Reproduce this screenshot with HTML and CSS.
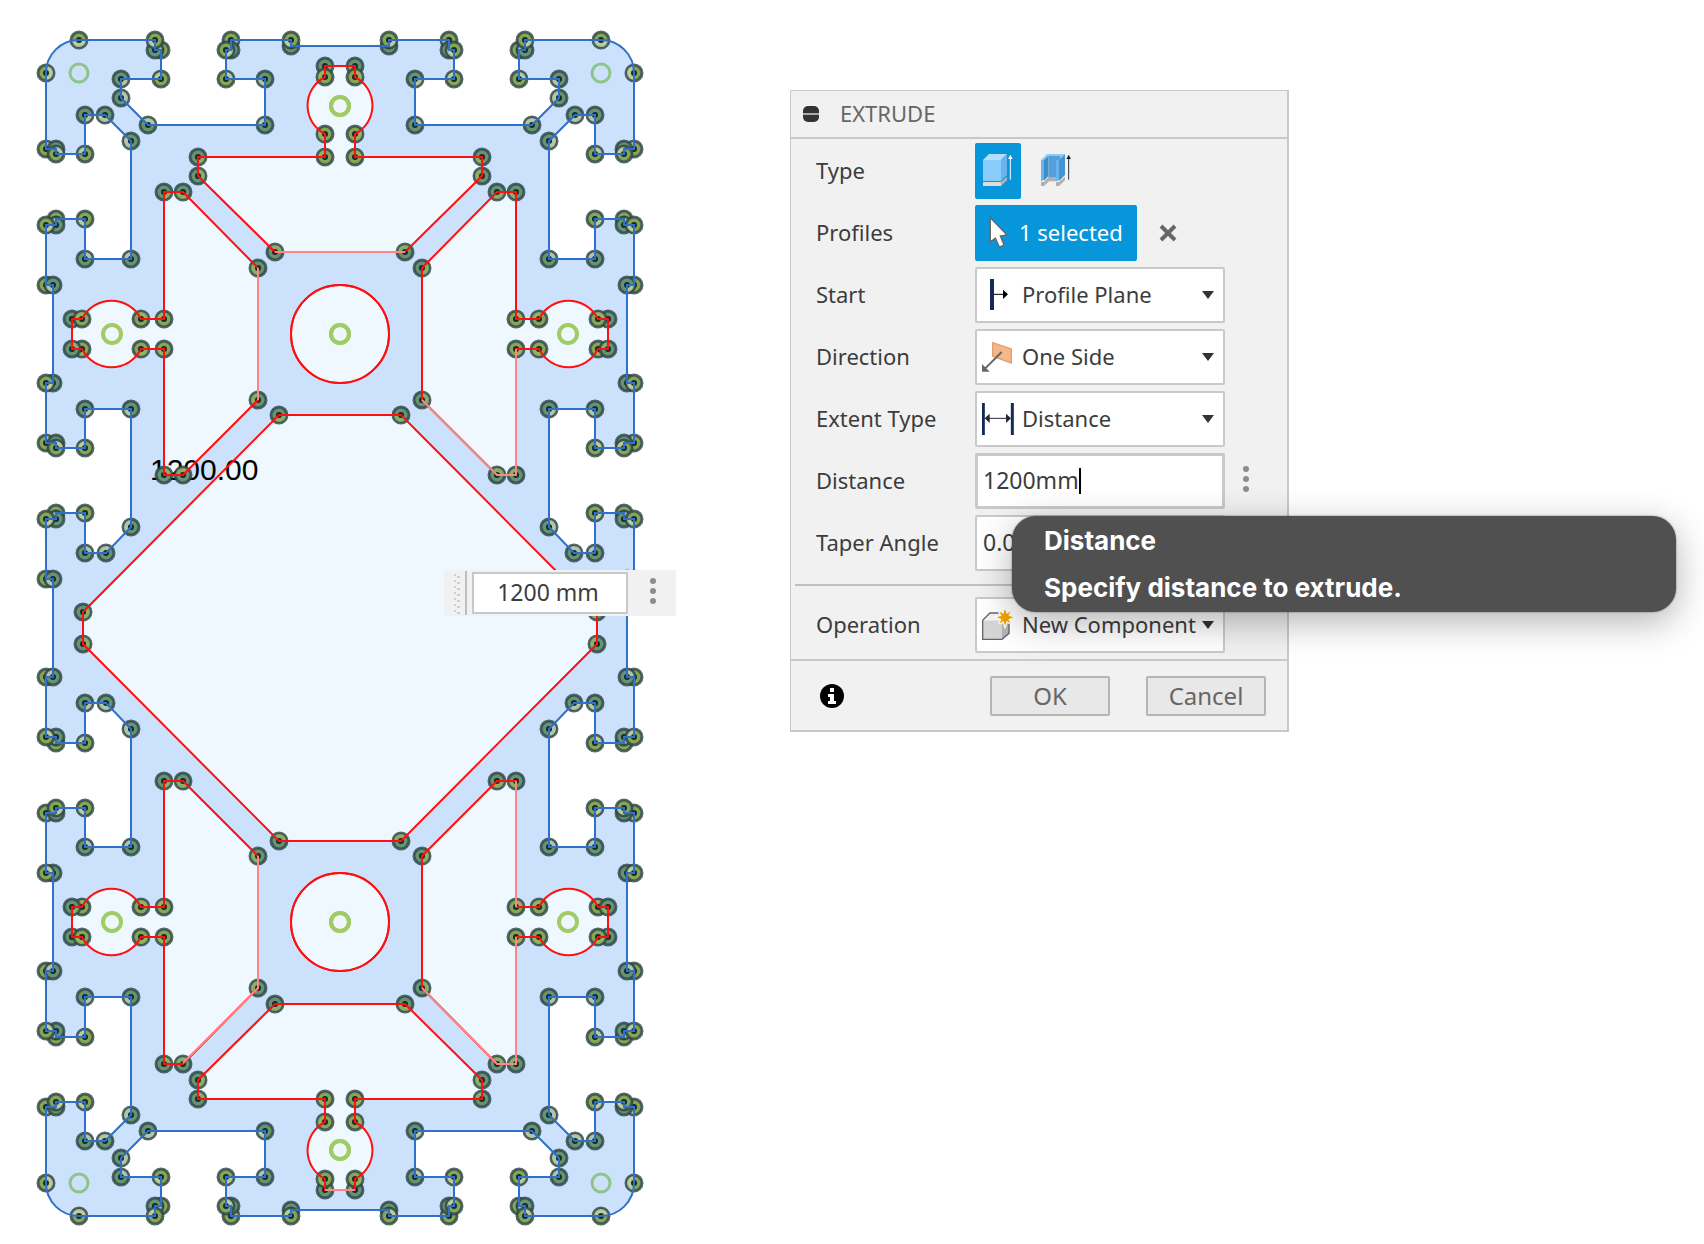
FILE: index.html
```html
<!DOCTYPE html>
<html lang="en">
<head>
<meta charset="utf-8">
<title>Extrude</title>
<link rel="stylesheet" href="styles.css">
</head>
<body>
<main class="workspace">
  <section class="canvas" aria-label="Sketch">
    <svg id="sketch" class="sketch" width="700" height="1240" viewBox="0 0 700 1240" role="img" aria-label="Extrusion profile">
      <text class="dimension" x="150" y="480">1200.00</text>
    </svg>
    <form class="manipulator">
      <svg class="grip" width="24" height="46" viewBox="0 0 24 46" aria-hidden="true">
        <path d="M10 5h2M13 7h3M10 11h2M13 13h3M10 17h2M13 19h3M10 23h2M13 25h3M10 29h2M13 31h3M10 35h2M13 37h3M10 41h2M13 43h3" stroke="#cfcfcf" stroke-width="2"/>
        <path d="M22 1v44" stroke="#bdbdbd" stroke-width="2"/>
      </svg>
      <input class="manipulator-input" type="text" value="1200 mm" aria-label="Distance value">
      <button class="dots" type="button" aria-label="Value options"><i></i><i></i><i></i></button>
    </form>
  </section>

  <form class="panel">
    <header class="panel-head">
      <button class="collapse" type="button" aria-label="Collapse"></button>
      <h1 class="panel-title">EXTRUDE</h1>
    </header>
    <div class="panel-body">
      <div class="row" role="radiogroup" aria-labelledby="type-label">
        <span class="label" id="type-label">Type</span>
        <div class="types">
          <label class="type">
            <input class="type-input" type="radio" name="type" aria-label="Extrude" checked>
            <svg width="46" height="56" viewBox="585 189 138 168" aria-hidden="true">
              <path d="M609 240h54v63h-54z" fill="#8accfc"/><path d="M609 240l18-18h54l-18 18z" fill="#b4deff"/>
              <path d="M663 240l18-18v63l-18 18z" fill="#67b4ee"/><path d="M609 306h54v12h-54z" fill="#dcdcdc"/>
              <path d="M663 306l18-16v11l-18 17z" fill="#b3b3b3"/>
              <path d="M691 299v-64" stroke="#fff" stroke-width="3"/><path d="M684 237l7-13 7 13z" fill="#fff"/>
            </svg>
          </label>
          <label class="type">
            <input class="type-input" type="radio" name="type" aria-label="Thin extrude">
            <svg width="46" height="56" viewBox="759 189 138 168" aria-hidden="true">
              <path d="M783 240l18-18h54l-18 18h-9l11-12h-32l-11 12z" fill="#8accfc"/>
              <path d="M783 240h9v60l-9 4z" fill="#67b4ee"/><path d="M792 240l13-12v60l-13 14z" fill="#3c8cc8"/>
              <path d="M805 228h35v10l-12 4v49h-23z" fill="#559fd9"/><path d="M828 240h9v61l-9 3z" fill="#67b4ee"/>
              <path d="M837 240l18-18v63l-18 18z" fill="#4593d0"/>
              <path d="M783 306h9l13-15h23v13h-21l-15 14h-9zM828 306h9l18-16v11l-18 17h-9z" fill="#b0b0b0"/>
              <path d="M866 299v-64" stroke="#333" stroke-width="3"/><path d="M859 237l7-13 7 13z" fill="#222"/>
            </svg>
          </label>
        </div>
      </div>
      <div class="row">
        <span class="label">Profiles</span>
        <div class="profiles">
          <button class="selection" type="button">
            <svg width="20" height="32" viewBox="628 408 60 96" aria-hidden="true"><path d="M632 413v73l15-12 12 27 14-6-11-27 20-3z" fill="#fff" stroke="#666" stroke-width="4"/></svg>
            1 selected
          </button>
          <button class="clear" type="button" aria-label="Clear selection">
            <svg width="18" height="18" viewBox="0 0 18 18" aria-hidden="true"><path d="M2 2l14 14M16 2L2 16" stroke="#666" stroke-width="4"/></svg>
          </button>
        </div>
      </div>
      <div class="row">
        <label class="label" for="start">Start</label>
        <div class="pick">
          <svg class="pick-icon" width="32" height="32" viewBox="606 594 96 96" aria-hidden="true"><path d="M636 594v93" stroke="#142b57" stroke-width="12"/><path d="M642 640h30" stroke="#000" stroke-width="3"/><path d="M669 626l15 14-15 14z"/></svg>
          <select class="pick-select" id="start"><option>Profile Plane</option></select>
          <svg class="pick-arrow" width="12" height="8" viewBox="0 0 12 8" aria-hidden="true"><path d="M0 0h12L6 8z"/></svg>
        </div>
      </div>
      <div class="row">
        <label class="label" for="direction">Direction</label>
        <div class="pick">
          <svg class="pick-icon" width="32" height="32" viewBox="606 58 96 96" aria-hidden="true"><path d="M638 63l56 19v42l-56-20z" fill="#f6b789" stroke="#dfa173" stroke-width="4"/><path d="M665 91l-50 50" stroke="#666" stroke-width="6"/><path d="M606 127v23h23z" fill="#666"/></svg>
          <select class="pick-select" id="direction"><option>One Side</option></select>
          <svg class="pick-arrow" width="12" height="8" viewBox="0 0 12 8" aria-hidden="true"><path d="M0 0h12L6 8z"/></svg>
        </div>
      </div>
      <div class="row">
        <label class="label" for="extent">Extent Type</label>
        <div class="pick">
          <svg class="pick-icon" width="32" height="32" viewBox="606 246 96 96" aria-hidden="true"><path d="M610 246v96M697 246v96" stroke="#142b57" stroke-width="9"/><path d="M624 292h62" stroke="#222b38" stroke-width="3"/><path d="M614 292l15-14v28zM693 292l-15-14v28z" fill="#222b38"/></svg>
          <select class="pick-select" id="extent"><option>Distance</option></select>
          <svg class="pick-arrow" width="12" height="8" viewBox="0 0 12 8" aria-hidden="true"><path d="M0 0h12L6 8z"/></svg>
        </div>
      </div>
      <div class="row">
        <label class="label" for="distance">Distance</label>
        <div class="value">
          <input class="value-input value-active" id="distance" type="text" value="1200mm" aria-describedby="distance-tip">
          <span class="caret"></span>
          <div class="tip" id="distance-tip" role="tooltip"><p>Distance</p><p>Specify distance to extrude.</p></div>
        </div>
        <button class="dots" type="button" aria-label="Distance options"><i></i><i></i><i></i></button>
      </div>
      <div class="row">
        <label class="label" for="taper">Taper Angle</label>
        <div class="value"><input class="value-input" id="taper" type="text" value="0.0 deg"></div>
      </div>
      <hr class="divider">
      <div class="row">
        <label class="label" for="operation">Operation</label>
        <div class="pick">
          <svg class="pick-icon" width="32" height="32" viewBox="606 326 96 96" aria-hidden="true"><path d="M608 360h58v57h-58z" fill="#d6d6d6"/><path d="M608 360l24-22h54l-20 22z" fill="#f4f4f4"/><path d="M666 360l22-18v57l-22 18z" fill="#b5b5b5"/><path d="M608 417v-57l22-22h57v61l-21 18z" fill="none" stroke="#666" stroke-width="4"/><path d="M675 326l5 15 12-8-7 13 15 5-15 6 7 12-12-7-5 14-5-14-13 8 8-13-15-6 15-5-8-13 13 8z" fill="#f7a400" stroke="#fff" stroke-width="8" paint-order="stroke"/></svg>
          <select class="pick-select" id="operation"><option>New Component</option></select>
          <svg class="pick-arrow" width="12" height="8" viewBox="0 0 12 8" aria-hidden="true"><path d="M0 0h12L6 8z"/></svg>
        </div>
      </div>
    </div>
    <footer class="panel-foot">
      <button class="info" type="button" aria-label="Information">
        <svg width="24" height="24" viewBox="0 0 24 24" aria-hidden="true"><circle cx="12" cy="12" r="12"/><path d="M10 4h4v4h-4zM8 10h6v7h2v3H8v-3h2v-4H8z" fill="#fff"/></svg>
      </button>
      <button class="action" type="button">OK</button>
      <button class="action" type="button">Cancel</button>
    </footer>
  </form>
</main>
<script src="sketch.js"></script>
</body>
</html>
```

FILE: styles.css
```css
* { box-sizing: border-box; }
body { margin: 0; background: #fff; color: #3c3c3c; font: 22px/30px "Noto Sans", sans-serif; }
button, input, select { font: inherit; color: inherit; }
button { padding: 0; border: 0; background: none; }

.workspace { display: flex; align-items: flex-start; gap: 90px; overflow: hidden; }
.canvas { position: relative; flex: none; }
.sketch { display: block; }
.dimension { font: 30px "Liberation Sans", sans-serif; fill: #000; }

.body-fill { fill: #cce2fc; }
.void-fill { fill: #f0f8ff; }
.edge { fill: none; stroke: #3070c8; stroke-width: 2; }
.loop { fill: none; stroke: #ff1010; stroke-width: 2; }
.loop-soft { stroke: #ff8585; }
.point { stroke: #2c4348; stroke-opacity: .8; stroke-width: 3; }
.point-out { fill: #86a653; }
.point-in { fill: #66946f; }
.wedge { fill: #d3dcb9; opacity: .7; }
.wedge-void { fill: #9cba62; opacity: .7; }
.core { fill: #122b35; }
.center { fill: none; stroke: #a0cb65; stroke-width: 4; }
.center-corner { stroke: #8fc58a; stroke-width: 3; }

.manipulator { position: absolute; left: 444px; top: 570px; display: flex; align-items: center; gap: 4px; width: 232px; height: 46px; background: #f1f1f1; }
.manipulator-input { width: 156px; height: 42px; border: 2px solid #c8c8c8; background: #fff; text-align: center; padding: 0 4px 2px 0; font-size: 23px; }
.grip { flex: none; }
.dots { display: flex; flex-direction: column; align-items: center; gap: 4px; width: 42px; padding-bottom: 4px; }
.dots i { width: 6px; height: 6px; border-radius: 50%; background: #8c8c8c; }

.panel { flex: 0 1 499px; margin-top: 90px; background: #f1f1f1; border: 1px solid #c9c9c9; border-right-width: 2px; border-bottom-width: 2px; }
.panel-head { display: flex; align-items: center; gap: 21px; height: 48px; padding-left: 12px; border-bottom: 2px solid #c9c9c9; }
.collapse { width: 16px; height: 16px; border-radius: 5px; background: linear-gradient(#333 7px, #aaa 7px 9px, #333 9px); }
.panel-title { margin: 0; padding-bottom: 2px; font-size: 22px; font-weight: 400; color: #666; }
.panel-body { display: flex; flex-direction: column; gap: 6px; padding: 4px 0 6px; border-bottom: 2px solid #c9c9c9; }
.row { display: flex; align-items: center; height: 56px; padding-left: 25px; }
.label { flex: 0 0 159px; padding-bottom: 2px; }
.types, .profiles { display: flex; align-items: center; gap: 12px; }
.type { position: relative; width: 46px; height: 56px; border-radius: 2px; }
.type svg { display: block; }
.type:has(:checked) { background: #0896da; }
.type-input { position: absolute; inset: 0; margin: 0; opacity: 0; }
.selection { display: flex; align-items: center; gap: 10px; width: 162px; height: 56px; padding: 0 0 2px 14px; border-radius: 2px; background: #0896da; color: #fff; white-space: nowrap; }
.profiles { gap: 22px; }
.clear { display: flex; }

.pick { display: grid; align-items: center; width: 250px; height: 56px; border: 2px solid #c9c9c9; border-radius: 2px; background: #fff; }
.pick > * { grid-area: 1 / 1; }
.pick-icon { margin-left: 5px; pointer-events: none; z-index: 1; }
.pick-select { width: 100%; height: 100%; padding: 0 0 2px 45px; border: 0; background: none; appearance: none; }
.pick-arrow { justify-self: end; margin-right: 9px; fill: #333; pointer-events: none; }

.value { position: relative; width: 250px; height: 56px; }
.value-input { width: 100%; height: 100%; padding: 0 6px 2px; border: 2px solid #c9c9c9; border-radius: 2px; background: #fff; font-size: 23px; }
.value-active { border-width: 3px; padding: 0 5px 2px; }
.caret { position: absolute; left: 104px; top: 15px; width: 2px; height: 26px; background: #000; }
.tip { position: absolute; z-index: 2; left: 37px; top: 63px; width: 664px; height: 96px; padding: 1px 32px; border-radius: 24px; background: #505050; color: #fff; font: 700 26px/47px Inter, sans-serif; box-shadow: 0 0 2px rgba(0, 0, 0, .5), 0 10px 36px rgba(0, 0, 0, .3); }
.tip p { margin: 0; }
.divider { width: calc(100% - 8px); margin: 7px 4px 5px; border: 0; border-top: 2px solid #c0c0c0; }

.panel-foot { display: flex; align-items: center; height: 69px; padding: 0 21px 0 29px; }
.info { display: flex; margin-right: auto; }
.action { width: 120px; height: 40px; margin-left: 36px; border: 2px solid #b5b5b5; border-radius: 2px; background: #e8e8e8; color: #666; font-size: 24px; }
```

FILE: sketch.js
```js
// The profile is symmetric about x = 340 and y = 628, so one quarter is described and mirrored.
(() => {
const NS = 'http://www.w3.org/2000/svg';
const svg = document.getElementById('sketch');
const label = svg.querySelector('text');
const MIRRORS = ['', 'matrix(-1 0 0 1 680 0)', 'matrix(1 0 0 -1 0 1256)', 'matrix(-1 0 0 -1 680 1256)'];

const topEdge = [[340,46],[291,46],[291,40],[231,40],[231,50],[226,50],[226,79],[265,79],[265,125],[148,125],[121,98],[121,79],[161,79],[161,50],[155,50],[155,40],[79,40]];
const sideEdge = [[46,73],[46,149],[56,149],[56,154],[85,154],[85,115],[105,115],[131,141],[131,259],[85,259],[85,219],[56,219],[56,225],[46,225],[46,285],[53,285],[53,383],[46,383],[46,443],[56,443],[56,448],[85,448],[85,409],[131,409],[131,527],[106,553],[85,553],[85,513],[56,513],[56,519],[46,519],[46,579],[53,579],[53,628]];
const keyTop = [[340,66],[325,66],[325,77]];
const keyBottom = [[325,134],[325,157],[198,157],[198,176],[275,252],[340,252]];
const sideHole = [[141,319],[164,319],[164,192],[183,192],[258,268],[258,400],[183,475],[164,475],[164,349],[141,349]];
const sideSlot = [[82,349],[72,349],[72,319],[82,319]];
const diamond = [[340,415],[279,415],[83,612],[83,628]];

const line = pts => pts.map(p => p.join(' ')).join('L');
const edge = `M${line(topEdge)}A33 33 0 0 0 ${line(sideEdge)}`;
const keyhole = `M${line(keyTop)}A32 32 0 0 0 ${line(keyBottom)}`;
const side = `M${line(sideHole)}A33 33 0 0 1 ${line(sideSlot)}A33 33 0 0 1 141 319`;
const bore = 'M291 334a49 49 0 1 0 98 0a49 49 0 1 0 -98 0';
const middle = `M${line(diamond)}`;

function add(parent, tag, cls, attrs) {
  const el = document.createElementNS(NS, tag);
  if (cls) el.setAttribute('class', cls);
  for (const k in attrs) el.setAttribute(k, attrs[k]);
  parent.appendChild(el);
  return el;
}
function layer(draw, below) {
  for (const m of MIRRORS) {
    const g = add(svg, 'g', '', m ? { transform: m } : {});
    draw(g);
    if (below) svg.insertBefore(g, label);
  }
}

// solid: 1 or -1, the turn direction that is a convex corner of the body
function points(g, pts, prev, next, solid, hole) {
  const all = [prev, ...pts, next];
  for (let i = 1; i < all.length - 1; i++) {
    const [x, y] = all[i];
    if (x === 340 || y === 628) continue;
    const a = [all[i - 1][0] - x, all[i - 1][1] - y];
    const b = [all[i + 1][0] - x, all[i + 1][1] - y];
    const cross = a[0] * b[1] - a[1] * b[0];
    const la = Math.hypot(...a), lb = Math.hypot(...b), r = 7;
    add(g, 'circle', `point ${cross * solid > 0 ? 'point-out' : 'point-in'}`, { cx: x, cy: y, r: 8 });
    add(g, 'path', hole ? 'wedge-void' : 'wedge', { d: `M${x} ${y}L${x + a[0] / la * r} ${y + a[1] / la * r}A${r} ${r} 0 0 ${cross > 0 ? 1 : 0} ${x + b[0] / lb * r} ${y + b[1] / lb * r}Z` });
    add(g, 'circle', 'core', { cx: x, cy: y, r: 3 });
  }
}

layer(g => add(g, 'path', 'body-fill', { d: edge + 'L340 628L340 46Z' }), true);
layer(g => add(g, 'path', 'void-fill', { d: `${keyhole}Z${side}Z${bore}Z${middle}L340 628Z` }), true);
layer(g => {
  points(g, topEdge, [400, 46], [60, 41], 1, false);
  points(g, sideEdge, [47, 60], [53, 700], 1, false);
  points(g, keyTop, [400, 66], [318, 82], -1, true);
  points(g, keyBottom, [318, 129], [400, 252], -1, true);
  points(g, sideHole, [135, 310], [135, 357], 1, true);
  points(g, sideSlot, [88, 357], [88, 310], 1, true);
  points(g, diamond, [400, 415], [83, 700], -1, true);
});
layer(g => {
  add(g, 'path', 'edge', { d: edge });
  add(g, 'path', 'loop', { d: keyhole });
  add(g, 'path', 'loop', { d: side + 'Z' });
  add(g, 'path', 'loop', { d: bore + 'Z' });
  add(g, 'path', 'loop', { d: middle });
  add(g, 'circle', 'center center-corner', { cx: 79, cy: 73, r: 9 });
  for (const [cx, cy] of [[340, 106], [112, 334], [340, 334]]) add(g, 'circle', 'center', { cx, cy, r: 9 });
});
add(svg, 'path', 'loop loop-soft', { d: 'M258 268V400M258 856V988L183 1063M275 252H405M516 349V475H497L422 400M516 781V907M516 937V1064H497L422 988M325 1190H355' });
})();
```
